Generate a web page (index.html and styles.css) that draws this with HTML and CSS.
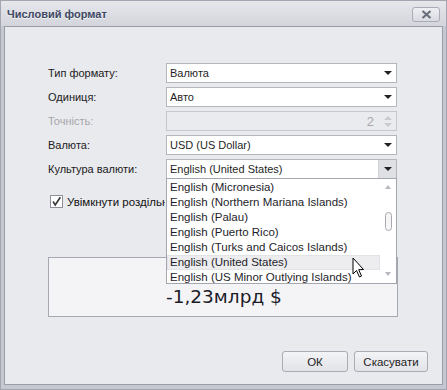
FILE: index.html
```html
<!DOCTYPE html>
<html>
<head>
    <title>Числовий формат</title>
    <link rel="stylesheet" href="styles.css">
</head>
<body>
    <div class="window">
        <div class="titlebar">
            <span class="title">Числовий формат</span>
            <button class="close-btn" type="button">
                <svg width="11" height="9" viewBox="0 0 11 9"><path d="M1.5 1 L9.5 8 M9.5 1 L1.5 8" stroke="#6b6f7c" stroke-width="2.2"/></svg>
            </button>
        </div>
        <div class="client">
            <div class="form">
                <div class="row">
                    <label class="lbl">Тип формату:</label>
                    <div class="combo"><span class="val">Валюта</span><span class="arrow"></span></div>
                </div>
                <div class="row">
                    <label class="lbl">Одиниця:</label>
                    <div class="combo"><span class="val">Авто</span><span class="arrow"></span></div>
                </div>
                <div class="row">
                    <label class="lbl disabled">Точність:</label>
                    <div class="combo combo-disabled">
                        <span class="val num">2</span>
                        <span class="spin"><span class="spin-up"></span><span class="spin-down"></span></span>
                    </div>
                </div>
                <div class="row">
                    <label class="lbl">Валюта:</label>
                    <div class="combo"><span class="val">USD (US Dollar)</span><span class="arrow"></span></div>
                </div>
                <div class="row culture-row">
                    <label class="lbl">Культура валюти:</label>
                    <div class="combo combo-open"><span class="val">English (United States)</span><span class="arrow pressed"></span></div>

                    <div class="popup">
                        <ul class="items">
                            <li>English (Micronesia)</li>
                            <li>English (Northern Mariana Islands)</li>
                            <li>English (Palau)</li>
                            <li>English (Puerto Rico)</li>
                            <li>English (Turks and Caicos Islands)</li>
                            <li class="hover">English (United States)</li>
                            <li>English (US Minor Outlying Islands)</li>
                        </ul>
                        <div class="vscroll">
                            <span class="sc-up"></span>
                            <span class="sc-thumb"></span>
                            <span class="sc-down"></span>
                        </div>
                        <svg class="cursor" width="14" height="22" viewBox="0 0 14 22">
                            <path d="M1 1 L1 17 L4.5 13.5 L7.5 20 L9.5 19 L6.7 12.7 L11.5 12.5 Z" fill="#fff" stroke="#000" stroke-width="1"/>
                        </svg>
                    </div>
                </div>
            </div>

            <div class="check-row">
                <span class="checkbox">
                    <svg width="13" height="13" viewBox="0 0 13 13"><path d="M2.5 6.5 L5 10.5 L11 1.5" fill="none" stroke="#3a3a3a" stroke-width="2"/></svg>
                </span>
                <span class="check-label">Увімкнути роздільник груп розрядів</span>
            </div>

            <div class="preview">
                <span class="preview-text">-1,23млрд $</span>
            </div>

            <div class="buttons">
                <button class="btn" type="button">ОК</button>
                <button class="btn" type="button">Скасувати</button>
            </div>
        </div>
    </div>
</body>
</html>
```
FILE: styles.css
```css
body {
    margin: 0;
    font-family: "Liberation Sans", Arial, sans-serif;
    font-size: 11px;
    color: #1f1f1f;
    background: #c6c8d1;
}

.window {
    width: 447px;
    height: 390px;
    box-sizing: border-box;
    border: 1px solid #a3a5b0;
    background: #c6c8d1;
    display: flex;
    flex-direction: column;
}

/* Заголовок вікна */
.titlebar {
    height: 25px;
    background: linear-gradient(#e6e7eb, #d3d5dc);
    display: flex;
    align-items: center;
    justify-content: space-between;
    padding: 0 6px 0 6px;
}

.title {
    font-weight: bold;
    color: #3d4863;
    font-size: 11px;
    text-shadow: 0 1px 0 #f4f4f6;
}

.close-btn {
    width: 28px;
    height: 15px;
    margin-top: 1px;
    padding: 0;
    border: 1px solid #a9abb6;
    border-radius: 3px;
    background: linear-gradient(#eeeff2, #d9dbe1);
    display: flex;
    align-items: center;
    justify-content: center;
}

.client {
    flex: 1;
    margin: 0 3px 4px 3px;
    border: 1px solid #9b9da7;
    background: #e9eaee;
    padding: 36px 44px 0 43px;
    display: flex;
    flex-direction: column;
}

/* Поля форми */
.form {
    display: flex;
    flex-direction: column;
    gap: 4px;
}

.row {
    display: flex;
    align-items: center;
    height: 20px;
}

.culture-row {
    position: relative;
}

.lbl {
    width: 118px;
    color: #202020;
}

.lbl.disabled {
    color: #a6a6aa;
}

.combo {
    width: 231px;
    height: 20px;
    box-sizing: border-box;
    border: 1px solid #b4b6be;
    background: #fff;
    display: flex;
    align-items: center;
}

.combo .val {
    flex: 1;
    padding-left: 3px;
}

.combo-disabled {
    background: #eaebef;
    border-color: #c5c7ce;
}

.val.num {
    text-align: right;
    color: #a8a8ac;
    padding-right: 5px;
    font-size: 13px;
}

.arrow {
    width: 17px;
    height: 18px;
    display: flex;
    align-items: center;
    justify-content: center;
}

.arrow::after {
    content: "";
    border-left: 4px solid transparent;
    border-right: 4px solid transparent;
    border-top: 4px solid #222;
}

.arrow.pressed {
    background: #dfe0e4;
    border-left: 1px solid #d0d1d6;
}

.spin {
    width: 17px;
    height: 18px;
    display: flex;
    flex-direction: column;
    align-items: center;
    justify-content: center;
    gap: 3px;
}

.spin-up {
    border-left: 4px solid transparent;
    border-right: 4px solid transparent;
    border-bottom: 4px solid #c9cacf;
}

.spin-down {
    border-left: 4px solid transparent;
    border-right: 4px solid transparent;
    border-top: 4px solid #c9cacf;
}

/* Випадаючий список */
.popup {
    position: absolute;
    left: 118px;
    top: 19px;
    width: 231px;
    height: 106px;
    box-sizing: border-box;
    border: 1px solid #a4a6b0;
    background: #fff;
    display: flex;
    z-index: 10;
}

.items {
    list-style: none;
    margin: 0;
    padding: 1px 0 0 0;
    flex: 1;
}

.items li {
    height: 15px;
    line-height: 15px;
    padding-left: 3px;
    color: #1e1e2a;
    font-size: 11.5px;
}

.items li.hover {
    background: #ededef;
    box-shadow: inset 0 0 0 1px #e2e3e6;
}

.vscroll {
    width: 16px;
    display: flex;
    flex-direction: column;
    align-items: center;
    padding-top: 6px;
}

.sc-up {
    border-left: 3px solid transparent;
    border-right: 3px solid transparent;
    border-bottom: 4px solid #b8b9be;
}

.sc-thumb {
    margin-top: 23px;
    width: 5px;
    height: 17px;
    border: 1px solid #a8a9ae;
    border-radius: 4px;
    background: #f6f6f7;
}

.sc-down {
    margin-top: 41px;
    border-left: 3px solid transparent;
    border-right: 3px solid transparent;
    border-top: 4px solid #b8b9be;
}

.cursor {
    position: absolute;
    left: 185px;
    top: 78px;
}

/* Прапорець */
.check-row {
    display: flex;
    align-items: center;
    margin-top: 16px;
    margin-left: 2px;
}

.checkbox {
    width: 13px;
    height: 13px;
    box-sizing: border-box;
    border: 1px solid #8e8f99;
    background: #fff;
    display: flex;
    align-items: center;
    justify-content: center;
    margin-right: 4px;
}

/* підпис перекритий списком, тому обрізаємо його */
.check-label {
    color: #111;
    font-size: 11.5px;
    white-space: nowrap;
    width: 98px;
    overflow: hidden;
}

/* Попередній перегляд */
.preview {
    margin-top: 49px;
    height: 60px;
    box-sizing: border-box;
    border: 1px solid #a7a9b2;
    background: #f4f4f7;
    padding-left: 117px;
    padding-top: 28px;
}

.preview-text {
    font-family: "DejaVu Sans", sans-serif;
    font-size: 18.5px;
    color: #1c1c28;
}

.buttons {
    margin-top: 34px;
    margin-right: -30px;
    display: flex;
    justify-content: flex-end;
    gap: 6px;
}

.btn {
    width: 66px;
    height: 21px;
    border: 1px solid #a9abb5;
    border-radius: 3px;
    background: linear-gradient(#f3f4f6, #e2e3e8);
    font-family: "Liberation Sans", Arial, sans-serif;
    font-size: 11.5px;
    color: #1f1f1f;
    padding: 0;
}

.btn + .btn {
    width: 74px;
}
```
